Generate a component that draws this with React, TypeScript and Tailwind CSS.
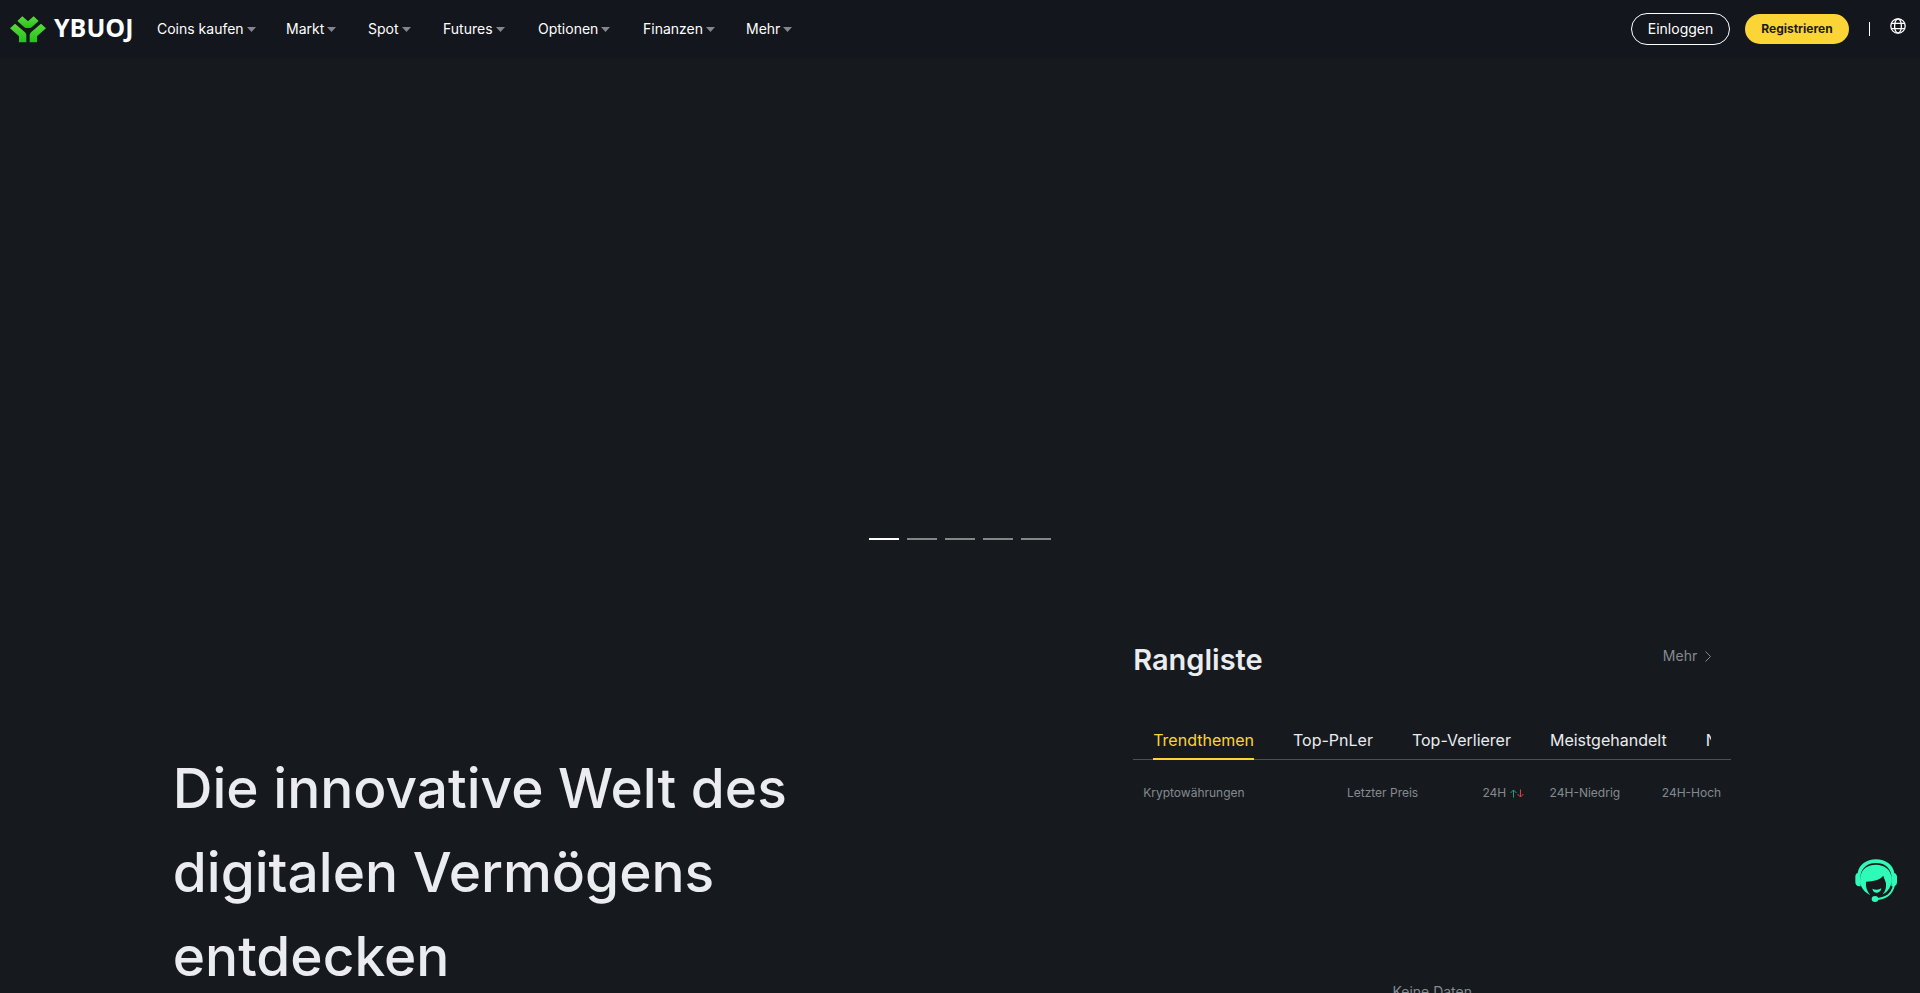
import { useState } from "react";

const navItems = [
  { label: "Coins kaufen", width: "w-[129px]" },
  { label: "Markt", width: "w-[82px]" },
  { label: "Spot", width: "w-[75px]" },
  { label: "Futures", width: "w-[95px]" },
  { label: "Optionen", width: "w-[105px]" },
  { label: "Finanzen", width: "w-[103px]" },
  { label: "Mehr", width: "w-[60px]" },
];

const tabs = ["Trendthemen", "Top-PnLer", "Top-Verlierer", "Meistgehandelt", "Neue Coins"];

const SLIDES = 5;

function LogoMark() {
  return (
    <svg width="36" height="27" viewBox="0 0 108 81" aria-hidden="true">
      <defs>
        <linearGradient id="logoGreen" x1="0" y1="0" x2="0" y2="1">
          <stop offset="0" stopColor="#5fd93f" />
          <stop offset="1" stopColor="#1fc41a" />
        </linearGradient>
      </defs>
      <g fill="url(#logoGreen)">
        <path d="M22 15 L37 1 L54 16 L71 1 L86 15 L65 34 Q63 36 60 36 H48 Q45 36 43 34 Z" />
        <path d="M0 37 L15 23 L45 49 Q49 53 49 58 V79 H27 V61 Z" />
        <path d="M108 37 L93 23 L63 49 Q59 53 59 58 V79 H81 V61 Z" />
      </g>
    </svg>
  );
}

function GlobeIcon() {
  return (
    <svg width="16" height="16" viewBox="0 0 16 16" fill="none" stroke="#fff" strokeWidth="1.3" aria-hidden="true">
      <circle cx="8" cy="8" r="7.2" />
      <ellipse cx="8" cy="8" rx="3.4" ry="7.2" />
      <path d="M1.4 5.4h13.2M1.4 10.6h13.2" />
    </svg>
  );
}

function SupportIcon() {
  return (
    <svg width="42" height="44" viewBox="45 56 126 132" aria-hidden="true">
      <g fill="#2ffbb9">
        <path d="M53 98 C57 73 79 57 108 57 C137 57 159 73 163 98 C168 100 171 104 171 110 V126 C171 133 167 138 160 138 H154 V103 C151 82 133 68 108 68 C83 68 66 82 62 103 V138 H58 C50 138 46 133 46 126 V110 C46 104 48 100 53 98 Z" />
        <path d="M62 108 C64 86 84 73 108 73 C133 73 152 88 155 112 V124 C151 144 141 156 128 162 C137 152 139 141 138 129 C137 122 132 115 130 106 C119 120 101 122 78 124 C76 140 81 153 91 164 C75 157 62 142 60 124 Z" />
        <path d="M97 145 C106 149 116 149 124 144 C123 154 115 158 110 157 C103 157 98 152 97 145 Z" />
      </g>
      <path d="M162 134 C157 159 138 176 106 176" fill="none" stroke="#2ffbb9" strokeWidth="6" />
      <ellipse cx="105" cy="176" rx="10" ry="9" fill="#2ffbb9" />
    </svg>
  );
}

function Header() {
  return (
    <header className="flex h-[58px] items-center justify-between bg-[#13161c] pl-[10px] pr-[14px]">
      <div className="flex items-center">
        <a href="#" className="flex w-[147px] items-center gap-2 text-white">
          <LogoMark />
          <span className="pb-1 font-['Open_Sans'] text-[25px] leading-7 font-bold">YBUOJ</span>
        </a>
        <nav className="flex text-sm text-white">
          {navItems.map((item) => (
            <a key={item.label} href="#" className={`flex items-center gap-[3px] whitespace-nowrap ${item.width}`}>
              {item.label}
              <svg width="9" height="5" viewBox="0 0 9 5" aria-hidden="true">
                <path d="M0 0h9L4.500 5z" fill="#83868f" />
              </svg>
            </a>
          ))}
        </nav>
      </div>
      <div className="flex items-center">
        <button type="button" className="h-8 w-[99px] rounded-full border border-white text-sm text-white">
          Einloggen
        </button>
        <button
          type="button"
          className="ml-[15px] h-[30px] w-[104px] rounded-full bg-[#fbd535] text-xs font-bold text-[#1b1b1b]"
        >
          Registrieren
        </button>
        <span className="mx-5 h-[14px] w-px bg-white" />
        <button type="button" aria-label="Sprache" className="mb-[6px]">
          <GlobeIcon />
        </button>
      </div>
    </header>
  );
}

function Banner() {
  const [active, setActive] = useState(0);

  return (
    <section className="flex h-[482px] items-end justify-center gap-2">
      {Array.from({ length: SLIDES }, (_, i) => (
        <button
          key={i}
          type="button"
          aria-label={`Banner ${i + 1}`}
          onClick={() => setActive(i)}
          className={`h-[2px] w-[30px] ${i === active ? "bg-white" : "bg-[#848788]"}`}
        />
      ))}
    </section>
  );
}

function Ranking() {
  const [tab, setTab] = useState(tabs[0]);

  return (
    <section className="w-[598px] pt-[100px]">
      <div className="flex items-start justify-between pr-5">
        <h2 className="text-[29px] leading-10 font-semibold text-[#eaecef]">Rangliste</h2>
        <a href="#" className="mt-[6px] flex items-center gap-2 text-sm text-[#848a90]">
          Mehr
          <svg width="6" height="11" viewBox="0 0 6 11" fill="none" stroke="#848a90" aria-hidden="true">
            <path d="M.5 .5l5 5-5 5" />
          </svg>
        </a>
      </div>

      <div className="mt-10 border-b border-[#4d5154] px-5">
        <div className="-mb-px flex gap-[39px] overflow-hidden">
          {tabs.map((name) => (
            <button
              key={name}
              type="button"
              onClick={() => setTab(name)}
              className={`h-10 shrink-0 border-b-2 pt-[2px] text-base ${
                name === tab ? "border-[#fbd535] text-[#fbd535]" : "border-transparent text-[#eaecef]"
              }`}
            >
              {name}
            </button>
          ))}
        </div>
      </div>

      <table className="mt-6 w-full table-fixed text-xs text-[#848a90]">
        <thead>
          <tr className="h-[18px] text-right">
            <th className="w-[185px] pl-[10px] text-left font-normal">Kryptowährungen</th>
            <th className="w-[110px] pr-[10px] font-normal">Letzter Preis</th>
            <th className="w-[106px] pr-[10px] font-normal">
              <span className="flex items-center justify-end gap-1">
                24H
                <svg width="14" height="9" viewBox="0 0 14 9" fill="none" aria-hidden="true">
                  <path d="M3.5 8.5V1M.5 4L3.5 1 6.5 4" stroke="#14a37c" />
                  <path d="M10.5 .5V8M7.500 5L10.5 8 13.500 5" stroke="#d8453f" />
                </svg>
              </span>
            </th>
            <th className="w-[96px] pr-[10px] font-normal">24H-Niedrig</th>
            <th className="w-[101px] pr-[10px] font-normal">24H-Hoch</th>
          </tr>
        </thead>
        <tbody>
          <tr>
            <td colSpan={5} className="pt-[180px] text-center text-sm">
              Keine Daten
            </td>
          </tr>
        </tbody>
      </table>
    </section>
  );
}

export default function App() {
  return (
    <div className="h-screen overflow-hidden bg-[#161a1e] font-['Inter',sans-serif]">
      <Header />
      <Banner />
      <main className="mx-auto flex w-[82%] justify-between pr-4">
        <h1 className="mt-[206px] max-w-[680px] text-[55px] leading-[84px] font-medium text-[#eaecef]">
          Die innovative Welt des digitalen Vermögens entdecken
        </h1>
        <Ranking />
      </main>
      <button type="button" aria-label="Support" className="fixed right-[23px] bottom-[90px]">
        <SupportIcon />
      </button>
    </div>
  );
}
